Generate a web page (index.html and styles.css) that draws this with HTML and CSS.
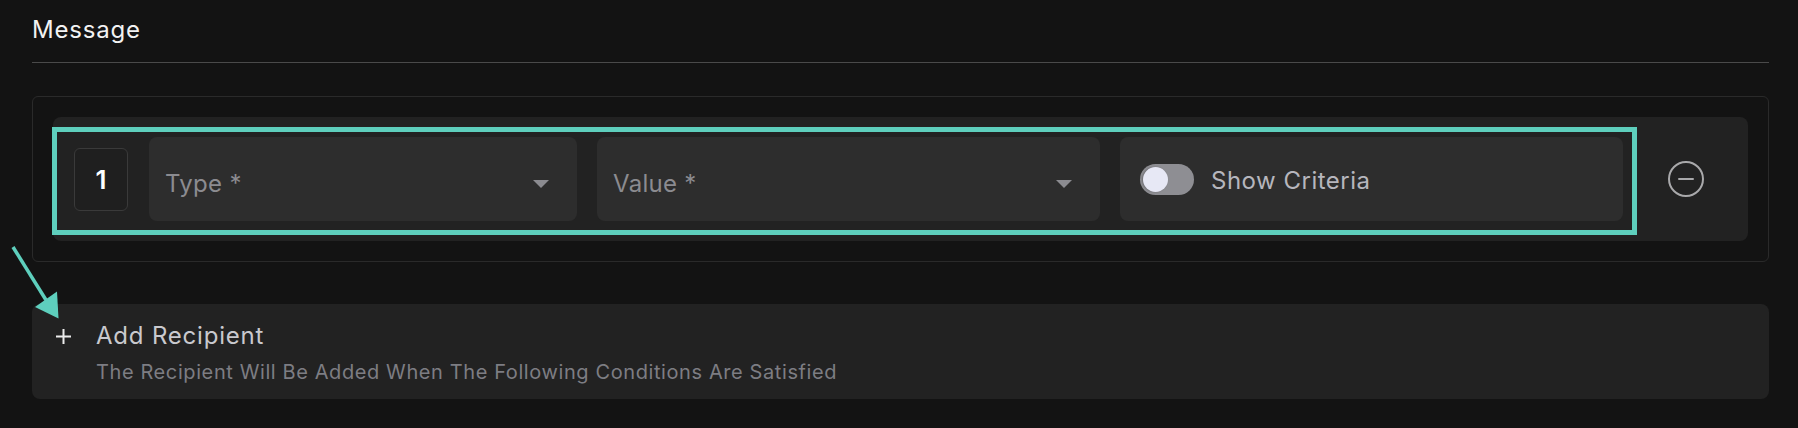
FILE: index.html
```html
<!DOCTYPE html>
<html>
<head>
    <meta charset="UTF-8">
    <meta name="viewport" content="width=device-width, initial-scale=1.0">
    <title>Message Recipients</title>
    <link rel="stylesheet" href="styles.css">
</head>
<body>
    <div class="page">
        <h2 class="section-title">Message</h2>

        <div class="recipients">
            <div class="recipient-row">
                <div class="row-index">1</div>
                <div class="row-fields">
                    <div class="select-field">
                        <span class="placeholder">Type *</span>
                        <span class="caret"></span>
                    </div>
                    <div class="select-field">
                        <span class="placeholder">Value *</span>
                        <span class="caret"></span>
                    </div>
                    <div class="toggle-field">
                        <span class="switch"><span class="knob"></span></span>
                        <span class="toggle-label">Show Criteria</span>
                    </div>
                </div>
                <button class="remove-btn" type="button">
                    <svg width="38" height="38" viewBox="0 0 38 38">
                        <circle cx="19" cy="19" r="17" fill="none" stroke="#a9a9ab" stroke-width="2"/>
                        <line x1="12" y1="19" x2="26" y2="19" stroke="#a9a9ab" stroke-width="2" stroke-linecap="round"/>
                    </svg>
                </button>
                <div class="highlight"></div>
            </div>
        </div>

        <div class="add-recipient">
            <span class="plus">
                <svg width="15" height="15" viewBox="0 0 15 15">
                    <line x1="7.5" y1="0" x2="7.5" y2="15" stroke="#ececec" stroke-width="2"/>
                    <line x1="0" y1="7.5" x2="15" y2="7.5" stroke="#ececec" stroke-width="2"/>
                </svg>
            </span>
            <div class="add-text">
                <div class="add-title">Add Recipient</div>
                <div class="add-hint">The Recipient Will Be Added When The Following Conditions Are Satisfied</div>
            </div>
        </div>

        <svg class="pointer-arrow" width="70" height="85" viewBox="0 0 70 85">
            <line x1="13" y1="7" x2="46" y2="60" stroke="#5ecfbd" stroke-width="3.5"/>
            <polygon points="35,67 57,51.5 58.5,78.5" fill="#5ecfbd"/>
        </svg>
    </div>
</body>
</html>
```

FILE: styles.css
```css
body {
    margin: 0;
    background: #131313;
    font-family: Inter, "Open Sans", sans-serif;
    color: #f2f2f2;
}

.page {
    position: relative;
    padding: 14px 29px 40px 32px;
}

.section-title {
    margin: 0;
    padding-bottom: 16px;
    font-size: 24px;
    line-height: 32px;
    font-weight: 400;
    letter-spacing: 0.8px;
    color: #f2f2f2;
    border-bottom: 1px solid #4a4a4a;
}

.recipients {
    margin-top: 33px;
    padding: 20px;
    border: 1px solid #2a2a2a;
    border-radius: 6px;
}

.recipient-row {
    position: relative;
    display: flex;
    align-items: center;
    padding: 20px 0 20px 21px;
    background: #222;
    border-radius: 8px;
}

.row-index {
    box-sizing: border-box;
    width: 54px;
    height: 63px;
    display: flex;
    align-items: center;
    justify-content: center;
    border: 1px solid #3a3a3a;
    border-radius: 6px;
    background: #1f1f1f;
    font-size: 26px;
    font-weight: 600;
    color: #fff;
}

.row-fields {
    flex: 1;
    margin-left: 21px;
    display: grid;
    grid-template-columns: 428px 1fr 1fr;
    gap: 20px;
}

.select-field, .toggle-field {
    box-sizing: border-box;
    height: 84px;
    display: flex;
    align-items: center;
    background: #2d2d2d;
    border-radius: 8px;
}

.select-field {
    justify-content: space-between;
    padding: 8px 28px 0 16px;
}

.placeholder {
    font-size: 24px;
    letter-spacing: 0.3px;
    color: #8b8b90;
}

.caret {
    width: 0;
    height: 0;
    margin-top: 2px;
    border-left: 8px solid transparent;
    border-right: 8px solid transparent;
    border-top: 8px solid #8b8b90;
}

.toggle-field {
    padding: 2px 0 0 20px;
    gap: 17px;
}

.switch {
    position: relative;
    width: 54px;
    height: 31px;
    margin-top: -2px;
    border-radius: 16px;
    background: #8e8e93;
}

.knob {
    position: absolute;
    left: 3px;
    top: 3px;
    width: 25px;
    height: 25px;
    border-radius: 50%;
    background: #e7e8f5;
    box-shadow: -1px 0 2px rgba(0, 0, 0, 0.25);
}

.toggle-label {
    font-size: 24px;
    letter-spacing: 0.5px;
    color: #b6b6bd;
}

.remove-btn {
    width: 125px;
    height: 84px;
    display: flex;
    align-items: center;
    justify-content: center;
    padding: 0;
    border: none;
    background: none;
    cursor: pointer;
}

.highlight {
    position: absolute;
    left: -1px;
    top: 10px;
    width: 1585px;
    height: 108px;
    box-sizing: border-box;
    border: 5px solid #5ecfbd;
    pointer-events: none;
}

.add-recipient {
    margin-top: 42px;
    display: flex;
    align-items: flex-start;
    padding: 16px 24px 13px 24px;
    background: #222;
    border-radius: 8px;
}

.plus {
    width: 40px;
    height: 32px;
    display: flex;
    align-items: center;
}

.plus svg {
    display: block;
}

.add-title {
    font-size: 24px;
    line-height: 32px;
    letter-spacing: 0.8px;
    color: #c9c9ce;
}

.add-hint {
    margin-top: 6px;
    font-size: 20px;
    line-height: 28px;
    letter-spacing: 0.6px;
    color: #7d7d83;
}

.pointer-arrow {
    position: absolute;
    left: 0;
    top: 240px;
}
```
